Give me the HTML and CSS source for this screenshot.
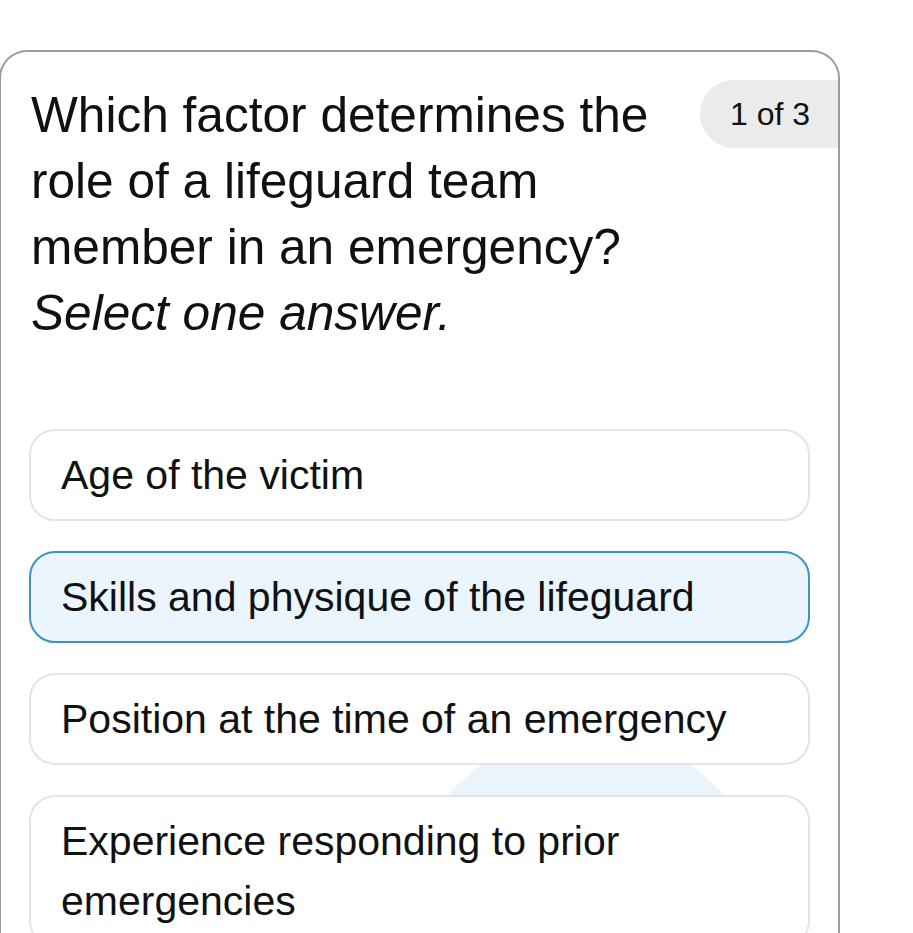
FILE: index.html
```html
<!DOCTYPE html>
<html lang="en">
<head>
<meta charset="utf-8">
<title>Lifeguard quiz</title>
<link rel="stylesheet" href="styles.css">
</head>
<body>
<main class="card">
  <header class="card-head">
    <h1 class="question">Which factor determines the role of a lifeguard team member in an emergency?<br><em class="hint">Select one answer.</em></h1>
    <span class="counter">1 of 3</span>
  </header>
  <div class="options">
    <span class="glow" aria-hidden="true"></span>
    <button class="option">Age of the victim</button>
    <button class="option selected">Skills and physique of the lifeguard</button>
    <button class="option">Position at the time of an emergency</button>
    <button class="option">Experience responding to prior emergencies</button>
  </div>
</main>
</body>
</html>
```
FILE: styles.css
```css
html, body {
  margin: 0;
  padding: 0;
  background: #ffffff;
  overflow: hidden;
}

body {
  font-family: "Liberation Sans", Arial, sans-serif;
  color: #111111;
  height: 933px;
}

.card {
  margin: 50px 0 0 -1px;
  width: 841px;
  min-height: 1000px;
  box-sizing: border-box;
  border: 2px solid #9c9c9c;
  border-bottom: none;
  border-radius: 28px 28px 0 0;
  padding: 28px 0 0 28px;
}

.card-head {
  display: flex;
  align-items: flex-start;
  gap: 30px;
}

.question {
  flex: 1;
  margin: 2px 0 0;
  padding-left: 2px;
  font-size: 49.6px;
  font-weight: 400;
  line-height: 66px;
}

.hint {
  font-style: italic;
}

.counter {
  flex: none;
  width: 138px;
  height: 68px;
  box-sizing: border-box;
  padding-left: 30px;
  display: flex;
  align-items: center;
  background: #ebebeb;
  border-radius: 34px 0 0 34px;
  font-size: 32px;
}

.options {
  position: relative;
  display: flex;
  flex-direction: column;
  gap: 30px;
  margin: 83px 28px 0 0;
}

.glow {
  position: absolute;
  left: 377px;
  top: 302px;
  width: 360px;
  height: 360px;
  border-radius: 50%;
  background: #eaf4fd;
}

.option {
  position: relative;
  display: block;
  width: 100%;
  text-align: left;
  font: inherit;
  font-size: 41px;
  line-height: 60px;
  color: #111111;
  background: #ffffff;
  border: 2px solid #e4e4e4;
  border-radius: 26px;
  padding: 14px 30px;
  margin: 0;
}

.option.selected {
  background: #eaf5fd;
  border-color: #3c93c8;
}
```
